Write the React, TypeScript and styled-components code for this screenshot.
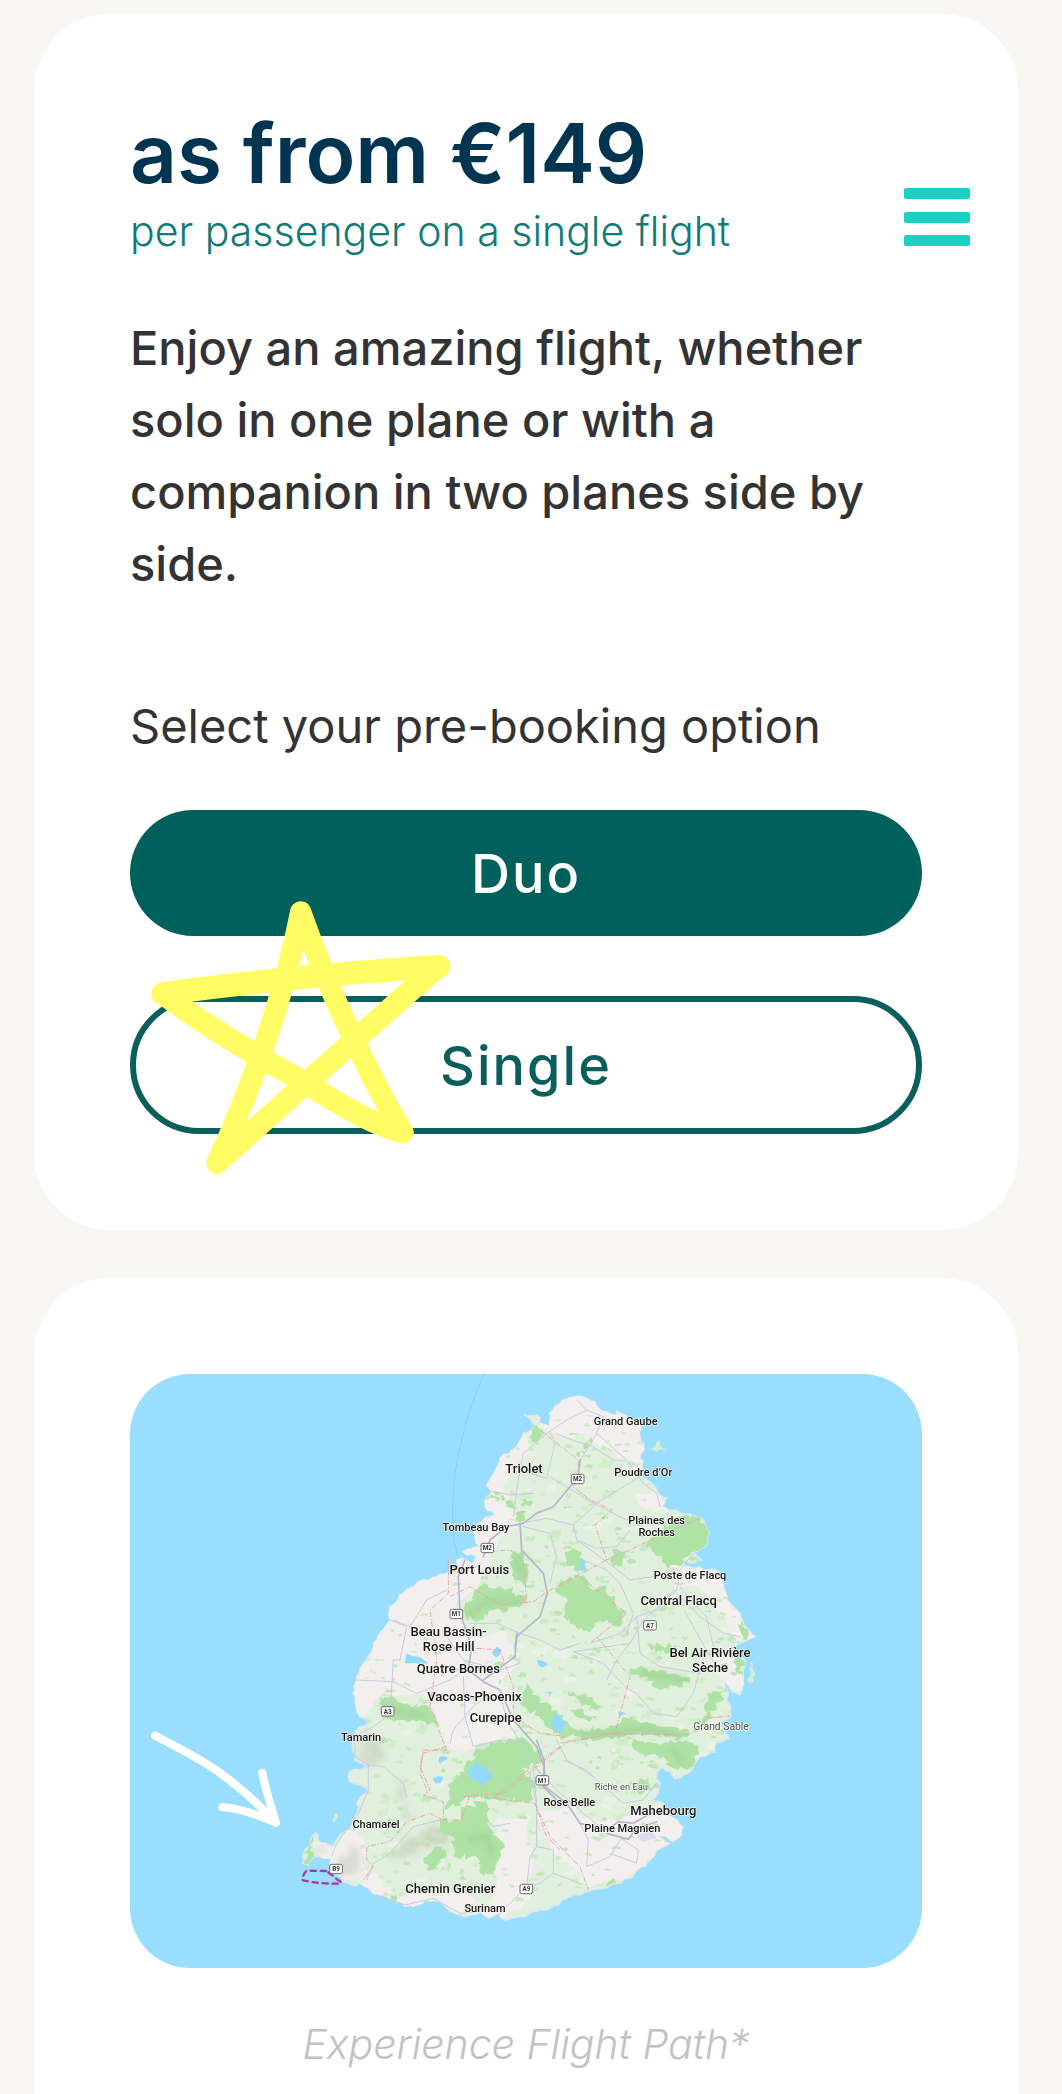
import React from "react";
import styled, { createGlobalStyle } from "styled-components";

const GlobalStyle = createGlobalStyle`
  *, *::before, *::after { box-sizing: border-box; }
  body {
    margin: 0;
    background: #f8f7f3;
    color: #333333;
    font-family: Inter, "Noto Sans", sans-serif;
  }
`;

const Page = styled.main`
  position: relative;
  display: flex;
  flex-direction: column;
  gap: 48px;
  min-height: 100vh;
  padding: 14px 44px 0 34px;
`;

const Card = styled.section<{ $last?: boolean }>`
  display: flex;
  flex-direction: column;
  flex: ${(p) => (p.$last ? "1" : "none")};
  padding: ${(p) => (p.$last ? "96px 96px 0" : "96px")};
  border-radius: ${(p) => (p.$last ? "76px 76px 0 0" : "76px")};
  background: #ffffff;
`;

const Price = styled.h1`
  margin: 0;
  color: #003552;
  font-size: 82px;
  font-weight: 600;
  line-height: 88px;
`;

const PriceNote = styled.p`
  margin: 0;
  color: #107b76;
  font-size: 41px;
  font-weight: 300;
  line-height: 66px;
`;

const Intro = styled.p`
  margin: 48px 0 90px;
  font-size: 47px;
  font-weight: 500;
  line-height: 72px;
`;

const Prompt = styled.p`
  margin: 0 0 48px;
  font-size: 47px;
  line-height: 72px;
`;

const Options = styled.div`
  position: relative;
  display: flex;
  flex-direction: column;
  gap: 60px;
`;

const OptionButton = styled.button<{ $filled?: boolean }>`
  min-height: ${(p) => (p.$filled ? "126px" : "138px")};
  padding: 0;
  border: ${(p) => (p.$filled ? "0" : "6px solid #0b5f5b")};
  border-radius: 69px;
  background: ${(p) => (p.$filled ? "#00615c" : "#ffffff")};
  color: ${(p) => (p.$filled ? "#ffffff" : "#0b5f5b")};
  font-family: inherit;
  font-size: 54px;
  font-weight: 500;
  letter-spacing: 2px;
  cursor: pointer;
`;

const Star = styled.svg`
  position: absolute;
  top: 70px;
  left: -10px;
  width: 360px;
  height: 310px;
  pointer-events: none;
`;

const MenuButton = styled.button`
  position: absolute;
  top: 188px;
  right: 92px;
  display: flex;
  flex-direction: column;
  justify-content: space-between;
  width: 66px;
  height: 58px;
  padding: 0;
  border: 0;
  background: transparent;
  cursor: pointer;
`;

const MenuBar = styled.span`
  height: 11px;
  border-radius: 2px;
  background: #19d0c3;
`;

const Figure = styled.figure`
  display: flex;
  flex-direction: column;
  gap: 44px;
  margin: 0;
`;

const MapFrame = styled.svg`
  display: block;
  width: 100%;
  height: auto;
  aspect-ratio: 4 / 3;
  border-radius: 60px;
  background: #99ddff;
`;

const Caption = styled.figcaption`
  color: #c2c2c2;
  font-size: 41px;
  font-style: italic;
  font-weight: 300;
  line-height: 64px;
  text-align: center;
`;

const PlaceName = styled.text<{ $size: number; $soft?: boolean }>`
  fill: ${(p) => (p.$soft ? "#4c5650" : "#161616")};
  font-family: Roboto, "Noto Sans", sans-serif;
  font-size: ${(p) => p.$size}px;
  font-weight: ${(p) => (p.$soft ? 400 : 500)};
  text-anchor: middle;
  stroke: #f6f6f3;
  stroke-width: 4px;
  stroke-linejoin: round;
  paint-order: stroke;
`;

const ShieldText = styled.text`
  fill: #333333;
  font-family: Roboto, "Noto Sans", sans-serif;
  font-size: 19px;
  font-weight: 700;
  text-anchor: middle;
`;

type Pt = [number, number];
type Sheet = "north" | "west" | "east" | "south" | "southeast";

const ORIGIN: Record<Sheet, Pt> = {
  north: [930, -12],
  west: [630, 558],
  east: [1290, 558],
  south: [450, 1098],
  southeast: [1110, 1098],
};

const parse = (sheet: Sheet, text: string): Pt[] =>
  text.trim().split(/\s+/).map((pair) => {
    const [x, y] = pair.split(",").map(Number);
    return [x + ORIGIN[sheet][0], y + ORIGIN[sheet][1]];
  });

const makeRandom = (seed: number) => () => {
  seed = (seed * 1664525 + 1013904223) % 4294967296;
  return seed / 4294967296;
};

/* Breaks straight edges into a natural, ragged outline. */
const ragged = (pts: Pt[], amount: number, step: number, seed: number): string => {
  const rnd = makeRandom(seed);
  const out: string[] = [];
  pts.forEach(([x, y], i) => {
    const [nx, ny] = pts[(i + 1) % pts.length];
    const n = Math.max(1, Math.round(Math.hypot(nx - x, ny - y) / step));
    for (let k = 0; k < n; k++) {
      const t = k / n;
      const j = k === 0 ? 0 : amount;
      out.push(
        `${Math.round(x + (nx - x) * t + (rnd() - 0.5) * j * 2)},${Math.round(y + (ny - y) * t + (rnd() - 0.5) * j * 2)}`
      );
    }
  });
  return out.join(" ");
};

const COAST: Pt[] = [
  ...parse("north", "252,132 300,142 298,158 330,168 328,130 345,110 375,88 415,78 465,95 480,120 530,135 530,122 560,138 605,170 600,200 612,240 600,265 612,300 600,320 640,345 665,380 680,385 665,410 700,420 740,432 785,445 808,490 795,530 760,545 785,570 750,580 730,565 735,590 800,600 830,600 850,640 860,690 900,730 910,760 945,800"),
  ...parse("east", "580,232 540,250 518,262 555,300 550,345 550,375 540,405 515,395 500,370 490,362 505,400 500,420 512,440 512,470 480,485 495,515 508,535 470,545 465,575 420,590 385,640 345,655 305,620 290,640"),
  ...parse("southeast", "480,130 475,160 455,180 490,190 500,215 530,240 548,260 545,285 520,305 500,290 475,290 510,310 480,325 465,345 440,370 410,390 400,410 350,430 310,445 265,455 200,475 150,505 100,515 60,530 15,540"),
  ...parse("south", "655,520 625,535 600,515 560,530 515,515 480,485 435,480 400,500 375,500 340,480 290,465 240,430 215,435 190,425 165,400 150,370 155,352 120,350 100,350 85,375 68,370 75,335 108,278 112,300 160,318 180,285 215,255 232,220 238,175 265,150 210,125 208,95 240,90 262,80 225,60 218,30"),
  ...parse("west", "42,530 60,500 85,490 60,470 40,400 50,350 80,300 110,240 150,180 150,140 190,100 230,70 290,50 325,35"),
  ...parse("north", "60,595 50,570 65,565 100,580 110,560 68,545 120,530 105,500 100,470 140,440 165,435 135,410 140,380 155,370 140,345 165,300 180,265 225,235 250,190 285,170 275,155"),
];

const URBAN: Pt[][] = [
  parse("north", "320,60 480,80 630,130 640,330 590,320 560,270 500,230 430,190 380,200 340,190 300,170"),
  parse("north", "130,270 200,240 250,190 262,240 200,330 190,370 210,420 230,470 180,500 150,590 120,640 20,720 -20,600 60,540 90,440 120,360"),
  parse("north", "590,370 650,360 690,420 640,430 600,410"),
  parse("north", "690,560 840,600 870,700 950,800 900,820 840,730 780,650 700,650"),
  parse("west", "140,100 320,30 370,60 350,160 420,230 500,220 540,280 490,350 520,450 540,520 470,540 400,570 330,560 290,510 280,440 230,400 130,400 60,480 20,440 40,350 90,270"),
  parse("east", "420,290 480,280 550,300 550,400 500,380 470,340"),
  parse("south", "640,250 740,220 760,330 750,480 670,540 620,530 650,440 670,330"),
  parse("southeast", "110,230 200,200 290,240 400,220 480,190 560,260 540,320 440,360 400,400 270,440 240,400 150,330"),
  parse("south", "240,430 290,400 340,470 400,450 460,440 580,470 660,500 640,540 400,520"),
  parse("south", "110,300 170,320 200,270 230,260 260,330 250,420 190,430 150,370 110,340"),
];

const HILLS: Pt[][] = [
  parse("south", "340,110 370,120 400,230 370,240"),
  parse("south", "240,30 310,30 320,60 250,70"),
  parse("south", "370,290 450,250 510,290 500,320 420,320 360,360 320,350"),
  parse("south", "175,350 210,310 240,340 245,410 195,410"),
  parse("south", "105,320 140,325 140,338 108,338"),
  parse("west", "60,550 100,520 130,560 100,600"),
];

const FOREST: Pt[][] = [
  parse("north", "655,490 720,440 785,440 805,490 795,530 740,560 720,590 680,590 640,545 610,530"),
  parse("north", "360,640 430,615 460,660 500,650 510,680 560,730 540,770 480,750 450,790 400,765 370,740 385,690 350,670"),
  parse("north", "385,545 420,535 440,600 400,600 375,575"),
  parse("north", "210,560 245,540 262,590 250,650 220,620"),
  parse("north", "75,705 130,640 200,660 260,690 230,710 160,720 120,750 80,745"),
  parse("north", "430,225 455,200 420,262 405,258"),
  parse("north", "262,145 300,180 295,225 275,210"),
  parse("north", "515,540 548,545 555,600 520,590"),
  parse("north", "160,365 210,390 230,420 200,410"),
  parse("north", "245,390 275,392 270,410 240,405"),
  parse("north", "225,430 260,425 255,450 230,455"),
  parse("north", "160,700 220,650 215,700 190,730"),
  parse("east", "265,255 350,255 345,275 265,275"),
  parse("east", "210,325 300,330 390,350 390,370 330,375 290,385 250,350 210,345"),
  parse("east", "0,500 60,505 130,510 180,490 190,470 270,490 330,500 390,520 360,535 240,520 130,535 60,530 0,530"),
  parse("east", "20,400 70,400 130,440 110,450 60,425"),
  parse("east", "10,440 70,450 110,480 60,475"),
  parse("east", "200,530 280,550 320,545 400,550 420,580 380,630 330,620 310,590 240,580"),
  parse("east", "440,400 490,390 490,420 450,450 430,500 400,520 440,460"),
  parse("east", "520,290 550,300 545,350 525,330"),
  parse("east", "545,180 565,220 560,240 540,210"),
  parse("east", "220,670 265,650 270,690 240,705"),
  parse("west", "120,410 200,430 270,440 300,500 240,480 180,480 130,480"),
  parse("west", "0,590 10,540 50,530 30,580"),
  parse("south", "540,95 600,30 660,0 740,0 790,60 720,90 760,120 760,180 640,175 560,170 500,210 510,130"),
  parse("south", "550,200 620,180 620,250 675,320 655,360 645,410 600,400 590,350 520,350 520,290 480,270 480,240 545,240"),
  parse("south", "435,350 470,320 500,340 460,390 440,385"),
  parse("south", "328,460 345,460 350,478 330,478"),
  parse("south", "100,285 90,370 72,365 85,325"),
  parse("west", "560,370 600,430 650,450 700,500 640,520 600,470 540,430"),
  parse("southeast", "320,430 345,415 345,432 320,440"),
];

const LAKES: Pt[][] = [
  parse("north", "412,600 425,562 440,595"),
  parse("west", "195,310 200,280 235,290 265,310"),
  parse("west", "380,640 410,605 460,645 425,678"),
  parse("west", "630,480 650,460 680,490 665,518 640,510"),
  parse("west", "455,275 470,260 485,270 470,292"),
  parse("west", "590,300 625,312 605,322"),
  parse("west", "298,590 325,595 300,612"),
  parse("west", "278,655 310,650 300,670 285,670"),
  parse("west", "620,395 640,395 630,415"),
  parse("east", "175,455 200,462 180,470"),
];

const ISLETS: Pt[][] = [
  parse("north", "630,235 645,228 655,205 660,228 680,240 650,245"),
  parse("east", "575,303 585,340 578,368 562,365 570,335"),
  parse("south", "158,240 172,218 175,228 162,248"),
];

const line = (sheet: Sheet, text: string) => parse(sheet, text).map((p) => p.join(",")).join(" ");

const MINOR_ROADS: string[] = [
  line("north", "410,90 440,120 380,150 320,190 250,250 235,330 220,440"),
  line("north", "440,120 490,140 470,190 440,240 420,270"),
  line("north", "470,190 560,270 610,340 650,370 660,410"),
  line("north", "345,190 410,215 450,225 520,270 555,272"),
  line("north", "330,185 345,220 320,325 240,300"),
  line("north", "330,320 460,400 560,450 640,440"),
  line("north", "400,465 470,400 560,345 600,320"),
  line("north", "240,460 320,445 400,465 410,510 470,535 530,530 570,480"),
  line("north", "410,510 500,575 570,630 640,620 700,600"),
  line("north", "430,570 500,600 540,640 580,730 560,790"),
  line("north", "140,360 210,375 280,370"),
  line("north", "250,470 330,490 350,560 330,640"),
  line("north", "700,660 650,720 590,740 540,790 450,820"),
  line("north", "700,660 780,740 850,790 900,800"),
  line("north", "720,650 760,700 800,740 820,830"),
  line("north", "760,550 720,600 710,660"),
  line("east", "350,90 250,180 210,250 40,275 130,310 200,385 230,400 280,460 350,470 400,400 420,330 500,310"),
  line("east", "375,155 450,290 470,320"),
  line("east", "210,250 170,300 140,360"),
  line("east", "230,170 240,280 300,320 420,340"),
  line("west", "50,360 160,365 230,400 330,360 400,310"),
  line("west", "160,180 210,200 260,120 320,90"),
  line("west", "160,300 180,300 200,200 150,180"),
  line("west", "150,470 160,300"),
  line("west", "60,520 100,500 150,465"),
  line("west", "370,350 375,470 400,560 480,540 560,550"),
  line("west", "320,230 370,300 480,330 540,310"),
  line("west", "390,190 470,190 540,220 600,240 660,270 720,250"),
  line("west", "330,550 340,510 400,440 450,400"),
  line("west", "480,400 500,480 560,580 600,640"),
  line("south", "225,0 225,50 265,75 265,150 235,220 170,310 155,350"),
  line("south", "265,75 310,80 370,130 380,170"),
  line("south", "290,465 375,495 460,475 540,520 600,515"),
  line("south", "260,420 280,370 330,340 400,260 480,240"),
  line("south", "640,540 740,440 750,350 770,320 770,200 750,100"),
  line("south", "740,440 780,430 820,400"),
  line("south", "690,250 640,260 620,240"),
  line("southeast", "100,90 110,190 110,320 160,330 160,400 240,430"),
  line("southeast", "240,250 265,300 260,380 330,350 360,300 400,290"),
  line("southeast", "330,340 410,370 415,330 370,300"),
  line("southeast", "190,60 260,90 300,130 370,190 430,180 470,130"),
  line("southeast", "105,80 170,150 250,220 300,260"),
  line("southeast", "170,0 200,60 280,110"),
];

const MAJOR_ROADS: string[] = [
  line("north", "420,270 415,320 340,410 290,430 250,460 200,470 150,510 130,560"),
  line("north", "240,460 245,540 310,610 322,670 300,740 230,800 225,830"),
  line("west", "375,0 355,50 360,160 395,260 385,330 430,365 480,390 520,480 590,560 612,620 610,680 650,720"),
  line("west", "530,220 525,290 430,360"),
  line("southeast", "110,0 132,60 135,140 200,190 240,250 290,262 340,270"),
  line("southeast", "330,265 355,245 400,250 470,210 500,220"),
  line("southeast", "320,280 385,298 410,265 470,245"),
];

const BORDERS: string[] = [
  line("north", "300,180 415,270 415,330 400,350 450,390 515,420 465,465 500,570 780,445"),
  line("north", "500,570 330,660 280,695 180,705 90,650 30,680"),
  line("north", "420,620 560,730 450,820"),
  line("north", "150,545 210,540 250,570 260,690"),
  line("east", "110,230 210,350 165,520 390,525 440,475 510,468"),
  line("east", "165,520 0,550"),
  line("west", "325,0 325,100 270,150 290,300 270,440 300,520 320,570 250,570 240,640 265,700"),
  line("west", "410,265 480,270 520,380 520,470 600,520 680,530"),
  line("west", "690,540 490,700 370,710"),
  line("south", "500,20 430,40 420,80 450,150 430,165 490,185 490,240 545,240 570,165 640,175 765,190"),
  line("south", "640,175 770,70 840,20"),
  line("south", "765,190 800,290 840,330"),
  line("south", "490,240 450,220 380,245 330,305 260,320 260,360 280,380 250,420"),
  line("southeast", "105,190 150,290 240,380 265,450"),
];

/* Small scattered vegetation, clipped to the coastline. */
const SPECKS: string[] = (() => {
  const rnd = makeRandom(71);
  return Array.from({ length: 620 }, (_, i) => {
    const x = 680 + rnd() * 1150;
    const y = 120 + rnd() * 1450;
    const w = 6 + rnd() * 18;
    const h = 4 + rnd() * 12;
    return ragged([[x, y], [x + w, y + h * 0.4], [x + w * 0.7, y + h], [x - w * 0.4, y + h * 0.8]], 4, 6, i + 9);
  });
})();

const FIELDS: string[] = (() => {
  const rnd = makeRandom(18);
  return Array.from({ length: 260 }, (_, i) => {
    const x = 700 + rnd() * 1120;
    const y = 160 + rnd() * 1400;
    const w = 12 + rnd() * 38;
    return ragged([[x, y], [x + w, y - w * 0.2], [x + w * 0.8, y + w * 0.4], [x, y + w * 0.3]], 5, 10, i + 77);
  });
})();

interface Place { sheet: Sheet; x: number; y: number; size: number; text: string; soft?: boolean }

const PLACES: Place[] = [
  { sheet: "north", x: 557, y: 164, size: 33, text: "Grand Gaube" },
  { sheet: "north", x: 252, y: 308, size: 39, text: "Triolet" },
  { sheet: "north", x: 610, y: 317, size: 33, text: "Poudre d’Or" },
  { sheet: "north", x: 650, y: 461, size: 33, text: "Plaines des" },
  { sheet: "north", x: 650, y: 499, size: 33, text: "Roches" },
  { sheet: "north", x: 108, y: 483, size: 33, text: "Tombeau Bay" },
  { sheet: "north", x: 118, y: 612, size: 39, text: "Port Louis" },
  { sheet: "north", x: 750, y: 626, size: 33, text: "Poste de Flacq" },
  { sheet: "north", x: 716, y: 706, size: 39, text: "Central Flacq" },
  { sheet: "west", x: 326, y: 228, size: 39, text: "Beau Bassin-" },
  { sheet: "west", x: 326, y: 273, size: 39, text: "Rose Hill" },
  { sheet: "west", x: 355, y: 338, size: 39, text: "Quatre Bornes" },
  { sheet: "west", x: 403, y: 422, size: 39, text: "Vacoas-Phoenix" },
  { sheet: "west", x: 467, y: 485, size: 39, text: "Curepipe" },
  { sheet: "west", x: 63, y: 544, size: 33, text: "Tamarin" },
  { sheet: "east", x: 450, y: 290, size: 39, text: "Bel Air Rivière" },
  { sheet: "east", x: 450, y: 336, size: 39, text: "Sèche" },
  { sheet: "east", x: 483, y: 510, size: 31, text: "Grand Sable", soft: true },
  { sheet: "southeast", x: 364, y: 149, size: 28, text: "Riche en Eau", soft: true },
  { sheet: "southeast", x: 208, y: 198, size: 33, text: "Rose Belle" },
  { sheet: "southeast", x: 490, y: 225, size: 39, text: "Mahebourg" },
  { sheet: "southeast", x: 367, y: 276, size: 33, text: "Plaine Magnien" },
  { sheet: "south", x: 288, y: 265, size: 33, text: "Chamarel" },
  { sheet: "south", x: 511, y: 458, size: 39, text: "Chemin Grenier" },
  { sheet: "south", x: 615, y: 515, size: 33, text: "Surinam" },
];

const SHIELDS: { sheet: Sheet; x: number; y: number; text: string }[] = [
  { sheet: "north", x: 413, y: 327, text: "M2" },
  { sheet: "north", x: 142, y: 534, text: "M2" },
  { sheet: "north", x: 49, y: 732, text: "M1" },
  { sheet: "north", x: 630, y: 766, text: "A7" },
  { sheet: "west", x: 143, y: 454, text: "A3" },
  { sheet: "west", x: 607, y: 661, text: "M1" },
  { sheet: "south", x: 168, y: 387, text: "B9" },
  { sheet: "south", x: 739, y: 447, text: "A9" },
];

const IslandMap = () => {
  const coast = ragged(COAST, 5, 14, 5);
  return (
    <MapFrame viewBox="0 0 2376 1782" role="img" aria-label="Map of Mauritius with the flight path">
      <defs>
        <clipPath id="land"><polygon points={coast} /></clipPath>
        <filter id="soft"><feGaussianBlur stdDeviation="9" /></filter>
      </defs>
      <path d="M1062 0 C1010 120 970 260 968 400 C966 480 975 530 990 560" fill="none" stroke="#8bcfee" strokeWidth="3" />
      <polygon points={coast} fill="#e0f0dc" stroke="#d8e8ee" strokeWidth="5" />
      <g clipPath="url(#land)">
        {FIELDS.map((p, i) => <polygon key={i} points={p} fill={i % 2 ? "#eaf1e6" : "#d3edcc"} />)}
        {URBAN.map((p, i) => <polygon key={i} points={ragged(p, 14, 20, i + 30)} fill="#f3efef" />)}
        <g filter="url(#soft)">
          {HILLS.map((p, i) => <polygon key={i} points={ragged(p, 18, 26, i + 60)} fill="#c6cfbe" opacity="0.6" />)}
        </g>
        {SPECKS.map((p, i) => <polygon key={i} points={p} fill={i % 3 ? "#c6e9be" : "#b5e3ab"} opacity="0.85" />)}
        {FOREST.map((p, i) => <polygon key={i} points={ragged(p, 10, 10, i + 90)} fill="#afe3a5" />)}
        <g filter="url(#soft)" fill="none" stroke="#93bd8b" strokeWidth="14" opacity="0.5">
          <polyline points={line("north", "80,740 130,700 180,690 250,690")} />
          <polyline points={line("north", "225,560 250,620")} />
          <polyline points={line("east", "60,520 160,520 260,505 360,530")} />
          <polyline points={line("east", "240,340 380,360")} />
          <polyline points={line("east", "330,560 370,610")} />
          <polyline points={line("west", "120,440 260,470")} />
          <polyline points={line("south", "560,300 620,290 640,350")} />
        </g>
        <polygon points={line("southeast", "410,285 455,275 470,295 425,305")} fill="#dadcf0" />
        {LAKES.map((p, i) => <polygon key={i} points={ragged(p, 4, 14, i + 140)} fill="#93d9fb" />)}
      </g>
      {ISLETS.map((p, i) => <polygon key={i} points={ragged(p, 4, 8, i + 170)} fill="#d3edd2" />)}
      <g fill="none" strokeLinejoin="round" strokeLinecap="round">
        <g stroke="#c9c9de" strokeWidth="3">{MINOR_ROADS.map((p, i) => <polyline key={i} points={p} />)}</g>
        <g stroke="#b4b6cc" strokeWidth="5">{MAJOR_ROADS.map((p, i) => <polyline key={i} points={p} />)}</g>
      </g>
      <g fill="none" stroke="#eba3ab" strokeWidth="3" strokeDasharray="16 5 4 5">
        {BORDERS.map((p, i) => <polyline key={i} points={p} />)}
      </g>
      {SHIELDS.map((s, i) => {
        const x = s.x + ORIGIN[s.sheet][0];
        const y = s.y + ORIGIN[s.sheet][1];
        return (
          <g key={i}>
            <rect x={x - 19} y={y - 14} width="38" height="28" rx="5" fill="#ffffff" stroke="#6b6b6b" strokeWidth="3" />
            <ShieldText x={x} y={y + 7}>{s.text}</ShieldText>
          </g>
        );
      })}
      {PLACES.map((p, i) => (
        <PlaceName key={i} x={p.x + ORIGIN[p.sheet][0]} y={p.y + ORIGIN[p.sheet][1]} $size={p.size} $soft={p.soft}>
          {p.text}
        </PlaceName>
      ))}
      <g fill="none" strokeLinecap="round" strokeLinejoin="round">
        <path d="M588 1491 L530 1490 Q516 1504 518 1518 Q560 1530 632 1529 Q634 1520 624 1519 Q604 1500 588 1491" stroke="#a83c93" strokeWidth="7" strokeDasharray="16 14" />
        <path d="M75 1085 C200 1150 290 1190 438 1346 M397 1196 C403 1235 425 1300 438 1346 C380 1322 330 1303 277 1300" stroke="#ffffff" strokeWidth="24" />
      </g>
    </MapFrame>
  );
};

export default function App() {
  return (
    <>
      <GlobalStyle />
      <Page>
        <Card>
          <Price>as from €149</Price>
          <PriceNote>per passenger on a single flight</PriceNote>
          <Intro>
            Enjoy an amazing flight, whether solo in one plane or with a companion in two planes side by side.
          </Intro>
          <Prompt id="booking-option">Select your pre-booking option</Prompt>
          <Options role="group" aria-labelledby="booking-option">
            <OptionButton type="button" $filled>Duo</OptionButton>
            <OptionButton type="button">Single</OptionButton>
            <Star viewBox="0 0 1080 930" aria-hidden="true">
              <g fill="none" stroke="#fffd63" strokeWidth="64" strokeLinecap="round" strokeLinejoin="round">
                <path d="M292 848 Q475 440 542 96 Q665 442 848 757" />
                <path d="M848 757 Q740 730 557 608 Q300 470 129 341" strokeWidth="66" />
                <path d="M956 258 Q640 535 292 848" strokeWidth="66" />
                <path d="M129 341 Q520 288 956 259" strokeWidth="70" />
              </g>
            </Star>
          </Options>
        </Card>
        <Card $last>
          <Figure>
            <IslandMap />
            <Caption>Experience Flight Path*</Caption>
          </Figure>
        </Card>
        <MenuButton type="button" aria-label="Open menu">
          <MenuBar />
          <MenuBar />
          <MenuBar />
        </MenuButton>
      </Page>
    </>
  );
}
